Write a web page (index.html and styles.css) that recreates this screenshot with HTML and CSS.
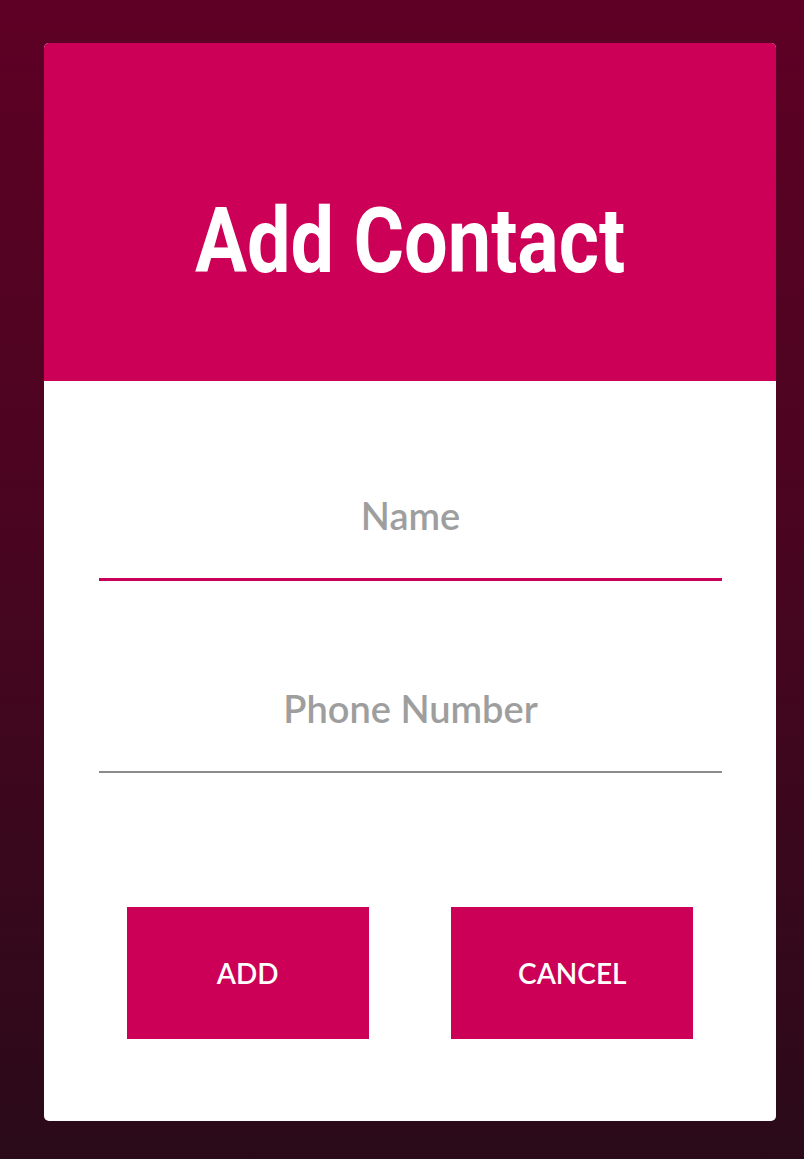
FILE: index.html
```html
<!DOCTYPE html>
<html lang="en">
<head>
<meta charset="utf-8">
<title>Add Contact</title>
<link rel="stylesheet" href="styles.css">
</head>
<body>
<div class="screen">
  <div class="dialog">
    <div class="dialog-header">
      <h1 class="title"><span class="title-text">Add Contact</span></h1>
    </div>
    <div class="dialog-body">
      <input class="field field-active" type="text" placeholder="Name">
      <input class="field field-second" type="tel" placeholder="Phone Number">
      <div class="actions">
        <button class="btn">ADD</button>
        <button class="btn">CANCEL</button>
      </div>
    </div>
  </div>
</div>
</body>
</html>
```

FILE: styles.css
```css
html, body {
  margin: 0;
  padding: 0;
}
body {
  width: 804px;
  height: 1159px;
  overflow: hidden;
  background: linear-gradient(180deg, #5e0025 0%, #4a0520 45%, #2a0a19 100%);
}
.screen {
  padding: 43px 28px 0 44px;
}
.dialog {
  width: 732px;
  background: #ffffff;
  border-radius: 5px;
  overflow: hidden;
}
.dialog-header {
  height: 338px;
  box-sizing: border-box;
  padding-top: 154px;
  background: #cb0056;
  text-align: center;
}
.title {
  margin: 0;
  font-family: Roboto, "Liberation Sans", sans-serif;
  font-weight: 700;
  font-size: 90px;
  line-height: 90px;
  color: #ffffff;
}
.title-text {
  display: inline-block;
  transform: scaleX(0.86);
}
.dialog-body {
  padding: 110px 54px 82px 55px;
  display: flex;
  flex-direction: column;
}
.field {
  display: block;
  width: 100%;
  box-sizing: content-box;
  margin: 0;
  padding: 0 0 39px 0;
  height: 48px;
  border: none;
  outline: none;
  background: transparent;
  font-family: Lato, "Noto Sans", sans-serif;
  font-weight: 600;
  font-size: 38px;
  line-height: 48px;
  text-align: center;
  color: #333;
}
.field::placeholder {
  color: #9e9e9e;
  opacity: 1;
}
.field-active {
  border-bottom: 3px solid #c8005a;
}
.field-second {
  margin-top: 103px;
  border-bottom: 2px solid #8c8c8c;
}
.actions {
  margin-top: 134px;
  margin-left: -55px;
  margin-right: -54px;
  display: flex;
  justify-content: space-evenly;
}
.btn {
  width: 242px;
  height: 132px;
  border: none;
  border-radius: 0;
  background: #cb0056;
  color: #ffffff;
  font-family: Lato, "Noto Sans", sans-serif;
  font-weight: 600;
  font-size: 28px;
  padding: 0;
  cursor: pointer;
}
```
